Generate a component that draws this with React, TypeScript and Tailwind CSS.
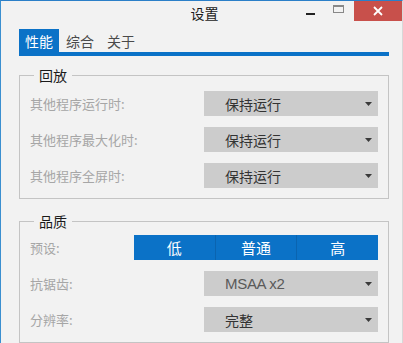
import React from "react";

const font = { fontFamily: '"Noto Sans CJK SC", "Noto Sans", sans-serif' } as React.CSSProperties;

function Arrow() {
  return (
    <svg width="7" height="4" viewBox="0 0 7 4" className="shrink-0">
      <path d="M0 0 H7 L3.5 4 Z" fill="#3a3a3a" />
    </svg>
  );
}

function Dropdown({ value, latin }: { value: string; latin?: boolean }) {
  return (
    <div className="w-[174px] h-[25px] bg-[#cccccc] flex items-center pl-[21px] pr-[6px]">
      <span
        className={latin ? "flex-1 text-[14px] text-[#5a5a5a] leading-none tracking-[-0.3px]" : "flex-1 text-[14px] text-[#333333] leading-none"}
        style={latin ? { fontFamily: '"Liberation Sans", Arial, sans-serif', fontSize: 15 } : undefined}
      >
        {value}
      </span>
      <Arrow />
    </div>
  );
}

function Row({ label, children }: { label: string; children: React.ReactNode }) {
  return (
    <div className="flex items-center justify-between h-[25px]">
      <span className="text-[13px] text-[#a6a6a6] leading-none">{label}</span>
      {children}
    </div>
  );
}

function Group({ title, children, pt }: { title: string; children: React.ReactNode; pt: string }) {
  return (
    <fieldset className={`border border-[#c4c4c4] px-[10px] pb-[10px] ${pt}`}>
      <legend className="ml-[4px] px-[5px] text-[14px] leading-[16px] text-[#1a1a1a]">{title}</legend>
      <div className="flex flex-col gap-[11px]">{children}</div>
    </fieldset>
  );
}

export default function App() {
  return (
    <div
      className="w-[403px] h-[343px] overflow-hidden bg-[#f2f2f2] border-t border-l border-r border-t-[#2b7fc8] border-l-[#3a8fd0] border-r-[#d8d8d8] flex flex-col"
      style={font}
    >
      <div className="h-[20px] shrink-0 flex items-center relative">
        <div className="flex-1 text-center text-[14px] text-[#1a1a1a] leading-none pl-[6px] pt-[3px]">设置</div>
        <div className="absolute right-0 top-0 h-[20px] flex items-stretch">
          <div className="w-[22px] flex items-center justify-center mr-[6px]">
            <div className="w-[9px] h-[2px] bg-[#222] mt-[5px]" />
          </div>
          <div className="w-[23px] flex items-center justify-center mr-[4px]">
            <div className="w-[11px] h-[8px] border border-[#888] border-t-2 -mt-[5px]" />
          </div>
          <div className="w-[48px] bg-[#c8504b] flex items-center justify-center">
            <svg width="10" height="10" viewBox="0 0 10 10">
              <path d="M1 1 L9 9 M9 1 L1 9" stroke="#ffffff" strokeWidth="1.8" />
            </svg>
          </div>
        </div>
      </div>

      <div className="px-[18px] pr-[13px] flex flex-col">
        <div className="mt-[8px] flex items-stretch h-[23px]">
          <div className="w-[40px] bg-[#0b72c7] text-white text-[14px] flex items-center justify-center leading-none">性能</div>
          <div className="ml-[7px] text-[14px] text-[#4a4a4a] flex items-center leading-none">综合</div>
          <div className="ml-[13px] text-[14px] text-[#4a4a4a] flex items-center leading-none">关于</div>
        </div>
        <div className="h-[4px] bg-[#0b72c7] w-[370px]" />

        <div className="mt-[11px] w-[370px]">
          <Group title="回放" pt="pt-[8px]">
            <Row label="其他程序运行时:">
              <Dropdown value="保持运行" />
            </Row>
            <Row label="其他程序最大化时:">
              <Dropdown value="保持运行" />
            </Row>
            <Row label="其他程序全屏时:">
              <Dropdown value="保持运行" />
            </Row>
          </Group>
        </div>

        <div className="mt-[14px] w-[370px]">
          <Group title="品质" pt="pt-[6px]">
            <Row label="预设:">
              <div className="w-[244px] h-[25px] bg-[#0b72c7] flex text-white text-[15px] leading-none">
                <div className="flex-1 flex items-center justify-center border-r border-[#0a64b0]">低</div>
                <div className="flex-1 flex items-center justify-center border-r border-[#0a64b0]">普通</div>
                <div className="flex-1 flex items-center justify-center">高</div>
              </div>
            </Row>
            <Row label="抗锯齿:">
              <Dropdown value="MSAA x2" latin />
            </Row>
            <Row label="分辨率:">
              <Dropdown value="完整" />
            </Row>
          </Group>
        </div>
      </div>
    </div>
  );
}
